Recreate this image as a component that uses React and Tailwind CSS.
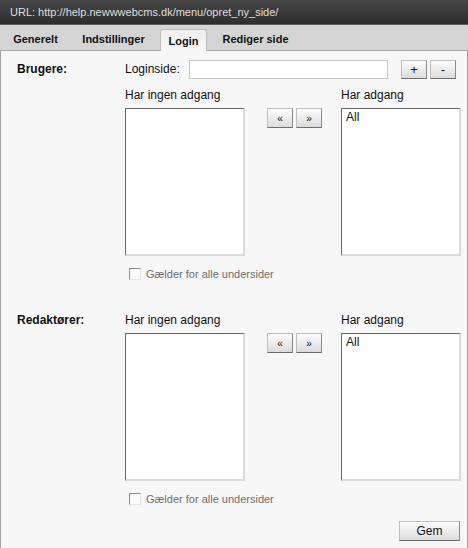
import React from 'react';

const btn =
  'flex items-center justify-center bg-gradient-to-b from-[#fdfdfd] to-[#dcdcdc] border border-[#bdbdbd] border-r-[#8a8a8a] border-b-[#6e6e6e] text-[#111]';

const listBox =
  'w-[120px] h-[148px] bg-white border-t border-l border-r-2 border-b-2 border-[#dadada] border-t-[#6a6a6a] border-l-[#6a6a6a] pl-[4px] pt-[1px] text-[12px] leading-[14px] text-[#111]';

const tabs = [
  { label: 'Generelt', w: 'w-[63px]' },
  { label: 'Indstillinger', w: 'w-[81px]' },
  { label: 'Login', w: 'w-[47px]', active: true },
  { label: 'Rediger side', w: 'w-[85px]' },
];

const Checkbox = () => (
  <div className="flex items-center mt-[12px] pl-[4px]">
    <span className="w-[12px] h-[12px] bg-[#fbfbfb] border border-t-[#8e8e8e] border-l-[#8e8e8e] border-r-[#e4e4e4] border-b-[#e4e4e4]" />
    <span className="ml-[5px] text-[11px] leading-[12px] text-[#6e6e6e]">Gælder for alle undersider</span>
  </div>
);

const AccessLists = ({ all }) => (
  <>
    <div className="flex text-[12px] leading-[14px] text-[#111]">
      <span className="w-[216px]">Har ingen adgang</span>
      <span>Har adgang</span>
    </div>
    <div className="flex mt-[6px]">
      <div className={listBox} />
      <div className="w-[96px] flex gap-[3px] pl-[22px]">
        <button type="button" className={`${btn} w-[26px] h-[20px] text-[10px]`}>«</button>
        <button type="button" className={`${btn} w-[26px] h-[20px] text-[10px]`}>»</button>
      </div>
      <div className={listBox}>{all}</div>
    </div>
    <Checkbox />
  </>
);

export default function App() {
  return (
    <div className="w-[468px] h-[548px] flex flex-col bg-[#f7f7f7] font-['Liberation_Sans',Arial,sans-serif]">
      <div className="h-[25px] shrink-0 bg-gradient-to-b from-[#484848] to-[#2d2d2d] border-b border-[#5c5c5c] pl-[10px] text-[11px] leading-[24px] text-[#dedede]">
        URL: http://help.newwwebcms.dk/menu/opret_ny_side/
      </div>

      <div className="h-[26px] shrink-0 flex items-end gap-[6px] pl-[4px] bg-[#d4d4d4] border-b border-[#a9a9a9]">
        {tabs.map((t) => (
          <div
            key={t.label}
            className={`${t.w} h-[22px] text-center text-[11px] font-bold leading-[22px] text-[#111] ${
              t.active
                ? 'relative -mb-px bg-gradient-to-b from-[#f0f0f0] to-[#f7f7f7] border border-b-0 border-[#bcbcbc] rounded-t-[3px] leading-[21px]'
                : ''
            }`}
          >
            {t.label}
          </div>
        ))}
      </div>

      <div className="flex-1 border-x border-[#a0a0a0] pt-[9px]">
        <div className="flex">
          <div className="w-[124px] pl-[16px] text-[12px] font-bold leading-[19px] text-[#111]">Brugere:</div>
          <div>
            <div className="flex items-center">
              <span className="w-[64px] text-[12px] leading-[19px] text-[#111]">Loginside:</span>
              <div className="w-[199px] h-[19px] bg-white border border-[#c6c6c6]" />
              <div className="flex gap-[3px] ml-[13px]">
                <button type="button" className={`${btn} w-[26px] h-[19px] text-[13px]`}>+</button>
                <button type="button" className={`${btn} w-[26px] h-[19px] text-[12px]`}>-</button>
              </div>
            </div>
            <div className="mt-[9px]">
              <AccessLists all="All" />
            </div>
          </div>
        </div>

        <div className="flex mt-[33px]">
          <div className="w-[124px] pl-[16px] text-[12px] font-bold leading-[14px] text-[#111]">Redaktører:</div>
          <div>
            <AccessLists all="All" />
          </div>
        </div>

        <div className="flex justify-end pr-[7px] mt-[16px]">
          <button type="button" className={`${btn} w-[61px] h-[20px] text-[12px]`}>Gem</button>
        </div>
      </div>
    </div>
  );
}
